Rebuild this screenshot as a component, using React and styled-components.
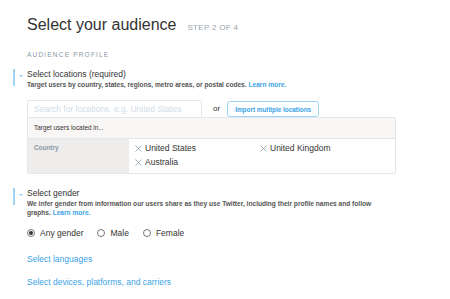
import React from 'react';
import styled, { createGlobalStyle } from 'styled-components';

const GlobalStyle = createGlobalStyle`
  html, body {
    margin: 0;
    padding: 0;
    background: #fff;
  }
  body {
    font-family: "Liberation Sans", Arial, sans-serif;
    color: #333;
  }
`;

const Page = styled.div`
  width: 450px;
  height: 299px;
  overflow: hidden;
  padding: 13px 0 0 27px;
  box-sizing: border-box;
`;

const Header = styled.div`
  display: flex;
  align-items: baseline;
  gap: 11px;
`;

const Title = styled.h1`
  margin: 0;
  font-size: 16px;
  line-height: 24px;
  font-weight: normal;
  color: #333;
`;

const Step = styled.span`
  font-size: 8px;
  letter-spacing: 0.3px;
  color: #99a3ad;
`;

const Eyebrow = styled.div`
  margin-top: 13px;
  font-size: 6.5px;
  line-height: 9px;
  letter-spacing: 1.2px;
  color: #8899a6;
`;

const SectionHead = styled.div`
  position: relative;
  margin-top: ${({ $top }) => $top}px;
  &::before {
    content: '';
    position: absolute;
    left: -14px;
    top: 0;
    width: 2px;
    height: 17px;
    background: #9fd4f7;
  }
`;

const Caret = styled.span`
  position: absolute;
  left: -8px;
  top: 6px;
  width: 0;
  height: 0;
  border-left: 2px solid transparent;
  border-right: 2px solid transparent;
  border-top: 2px solid #8ecdf8;
`;

const HeadTitle = styled.div`
  font-size: 8.5px;
  line-height: 11px;
  color: #333;
`;

const HeadDesc = styled.div`
  font-size: 6.6px;
  line-height: 9px;
  font-weight: bold;
  color: #555;
  max-width: 350px;
`;

const Link = styled.a`
  color: #3ba3e6;
  text-decoration: none;
  font-weight: ${({ $bold }) => ($bold ? 'bold' : 'normal')};
`;

const SearchRow = styled.div`
  display: flex;
  align-items: center;
  margin-top: 10px;
`;

const SearchInput = styled.div`
  box-sizing: border-box;
  width: 175px;
  height: 17px;
  border: 1px solid #e1e8ed;
  border-bottom: none;
  border-radius: 2px 2px 0 0;
  padding: 0 6px;
  font-size: 8.5px;
  line-height: 16px;
  color: #cfdde8;
`;

const Or = styled.span`
  font-size: 8px;
  color: #333;
  margin: 0 7px 0 11px;
`;

const ImportButton = styled.button`
  box-sizing: border-box;
  height: 16px;
  padding: 0 7px;
  border: 1px solid #9fd4f7;
  border-radius: 3px;
  background: #fff;
  color: #3ba3e6;
  font-family: "Liberation Sans", Arial, sans-serif;
  font-size: 6.4px;
  font-weight: bold;
  margin-top: 2px;
`;

const Table = styled.div`
  box-sizing: border-box;
  width: 369px;
  border: 1px solid #e1e8ed;
  border-radius: 0 2px 2px 2px;
`;

const TableHeader = styled.div`
  height: 20px;
  padding-left: 6px;
  background: #f9f6f6;
  border-bottom: 1px solid #e1e8ed;
  font-size: 6.4px;
  line-height: 20px;
  color: #333;
`;

const TableRow = styled.div`
  display: flex;
  height: 34px;
`;

const RowLabel = styled.div`
  width: 101px;
  background: #efecec;
  padding: 5px 6px;
  box-sizing: border-box;
  font-size: 6.4px;
  font-weight: bold;
  color: #8899a6;
`;

const Items = styled.div`
  display: grid;
  grid-template-columns: 125px 125px;
  grid-auto-rows: 14px;
  padding: 2px 0 0 6px;
  align-content: start;
`;

const Item = styled.div`
  display: flex;
  align-items: center;
  gap: 3px;
  font-size: 8.5px;
  color: #333;
`;

const Remove = styled.svg`
  width: 7px;
  height: 7px;
  flex: none;
`;

const Radios = styled.div`
  display: flex;
  align-items: center;
  gap: 14px;
  margin-top: 11px;
  height: 10px;
`;

const RadioLabel = styled.label`
  display: flex;
  align-items: center;
  gap: 5px;
  font-size: 8.5px;
  color: #333;
`;

const RadioDot = styled.span`
  box-sizing: border-box;
  width: 8px;
  height: 8px;
  border-radius: 50%;
  border: 1px solid #777;
  background: #fff;
  display: flex;
  align-items: center;
  justify-content: center;
  &::after {
    content: '';
    width: 4px;
    height: 4px;
    border-radius: 50%;
    background: ${({ $on }) => ($on ? '#333' : 'transparent')};
  }
`;

const MoreLink = styled.div`
  margin-top: ${({ $top }) => $top}px;
  font-size: 8.5px;
  line-height: 11px;
`;

const locations = ['United States', 'United Kingdom', 'Australia'];

const RemoveIcon = () => (
  <Remove viewBox="0 0 7 7">
    <path d="M0.5 0.5L6.5 6.5M6.5 0.5L0.5 6.5" stroke="#9aa8b3" strokeWidth="0.9" fill="none" />
  </Remove>
);

export default function App() {
  return (
    <>
      <GlobalStyle />
      <Page>
        <Header>
          <Title>Select your audience</Title>
          <Step>STEP 2 OF 4</Step>
        </Header>
        <Eyebrow>AUDIENCE PROFILE</Eyebrow>

        <SectionHead $top={10}>
          <Caret />
          <HeadTitle>Select locations (required)</HeadTitle>
          <HeadDesc>
            Target users by country, states, regions, metro areas, or postal codes.{' '}
            <Link $bold>Learn more.</Link>
          </HeadDesc>
        </SectionHead>

        <SearchRow>
          <SearchInput>Search for locations, e.g. United States</SearchInput>
          <Or>or</Or>
          <ImportButton>Import multiple locations</ImportButton>
        </SearchRow>
        <Table>
          <TableHeader>Target users located in...</TableHeader>
          <TableRow>
            <RowLabel>Country</RowLabel>
            <Items>
              {locations.map((name) => (
                <Item key={name}>
                  <RemoveIcon />
                  {name}
                </Item>
              ))}
            </Items>
          </TableRow>
        </Table>

        <SectionHead $top={14}>
          <Caret />
          <HeadTitle>Select gender</HeadTitle>
          <HeadDesc>
            We infer gender from information our users share as they use Twitter, including their profile names and follow
            graphs. <Link $bold>Learn more.</Link>
          </HeadDesc>
        </SectionHead>

        <Radios>
          <RadioLabel><RadioDot $on />Any gender</RadioLabel>
          <RadioLabel><RadioDot />Male</RadioLabel>
          <RadioLabel><RadioDot />Female</RadioLabel>
        </Radios>

        <MoreLink $top={16}><Link>Select languages</Link></MoreLink>
        <MoreLink $top={12}><Link>Select devices, platforms, and carriers</Link></MoreLink>
      </Page>
    </>
  );
}
